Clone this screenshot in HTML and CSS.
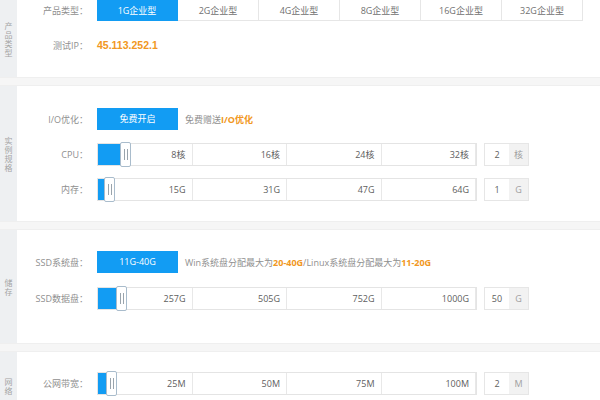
FILE: index.html
```html
<!DOCTYPE html>
<html lang="zh-CN">
<head>
<meta charset="utf-8">
<title>配置选择</title>
<link rel="stylesheet" href="styles.css">
</head>
<body>
<div class="page">
  <section class="sec sec-type">
    <div class="side"><span>产品类型</span></div>
    <div class="body">
      <div class="row row-tabs">
        <div class="label">产品类型：</div>
        <div class="tabs">
          <div class="tab active">1G企业型</div>
          <div class="tab">2G企业型</div>
          <div class="tab">4G企业型</div>
          <div class="tab">8G企业型</div>
          <div class="tab">16G企业型</div>
          <div class="tab">32G企业型</div>
        </div>
      </div>
      <div class="row">
        <div class="label">测试IP：</div>
        <div class="ip">45.113.252.1</div>
      </div>
    </div>
  </section>

  <section class="sec sec-spec">
    <div class="side"><span>实例规格</span></div>
    <div class="body">
      <div class="row">
        <div class="label">I/O优化：</div>
        <div class="btn">免费开启</div>
        <div class="hint">免费赠送<b>I/O优化</b></div>
      </div>
      <div class="row">
        <div class="label">CPU：</div>
        <div class="slider">
          <div class="seg">8核</div><div class="seg">16核</div><div class="seg">24核</div><div class="seg">32核</div>
          <div class="fill" style="width:25px"></div>
          <div class="handle" style="left:22px"><i></i><i></i></div>
        </div>
        <div class="num"><span class="val">2</span><span class="unit">核</span></div>
      </div>
      <div class="row">
        <div class="label">内存：</div>
        <div class="slider">
          <div class="seg">15G</div><div class="seg">31G</div><div class="seg">47G</div><div class="seg">64G</div>
          <div class="fill" style="width:10px"></div>
          <div class="handle" style="left:6px"><i></i><i></i></div>
        </div>
        <div class="num"><span class="val">1</span><span class="unit">G</span></div>
      </div>
    </div>
  </section>

  <section class="sec sec-disk">
    <div class="side"><span>储存</span></div>
    <div class="body">
      <div class="row">
        <div class="label">SSD系统盘：</div>
        <div class="btn">11G-40G</div>
        <div class="hint">Win系统盘分配最大为<b>20-40G</b>/Linux系统盘分配最大为<b>11-20G</b></div>
      </div>
      <div class="row">
        <div class="label">SSD数据盘：</div>
        <div class="slider">
          <div class="seg">257G</div><div class="seg">505G</div><div class="seg">752G</div><div class="seg">1000G</div>
          <div class="fill" style="width:22px"></div>
          <div class="handle" style="left:18px"><i></i><i></i></div>
        </div>
        <div class="num"><span class="val">50</span><span class="unit">G</span></div>
      </div>
    </div>
  </section>

  <section class="sec sec-net">
    <div class="side"><span>网络</span></div>
    <div class="body">
      <div class="row">
        <div class="label">公网带宽：</div>
        <div class="slider">
          <div class="seg">25M</div><div class="seg">50M</div><div class="seg">75M</div><div class="seg">100M</div>
          <div class="fill" style="width:12px"></div>
          <div class="handle" style="left:8px"><i></i><i></i></div>
        </div>
        <div class="num"><span class="val">2</span><span class="unit">M</span></div>
      </div>
    </div>
  </section>
</div>
</body>
</html>
```

FILE: styles.css
```css
* { box-sizing: border-box; }
html, body { margin: 0; padding: 0; }
body {
  width: 600px;
  height: 400px;
  overflow: hidden;
  background: #f6f6f6;
  font-family: "Open Sans", "Noto Sans CJK SC", sans-serif;
  font-size: 9px;
  color: #666;
}
.page { display: flex; flex-direction: column; gap: 7px; }
.sec {
  display: flex;
  background: #fff;
  border-top: 1px solid #efefef;
  border-bottom: 1px solid #efefef;
}
.sec-type { border-top: none; height: 78px; }
.sec-spec { height: 137px; }
.sec-disk { height: 115px; }
.sec-net { height: 70px; }
.side {
  width: 17px;
  flex: none;
  background: #eef0f2;
  display: flex;
  align-items: center;
  justify-content: center;
}
.side span {
  display: block;
  width: 8px;
  font-size: 8px;
  line-height: 9px;
  word-break: break-all;
  color: #a4a4a4;
}
.body {
  flex: 1;
  display: flex;
  flex-direction: column;
  gap: 13px;
  padding-top: 22px;
}
.sec-type .body { padding-top: 0; gap: 13px; }
.sec-disk .body { padding-top: 21px; gap: 14px; }
.sec-net .body { padding-top: 20px; }
.row {
  display: flex;
  align-items: center;
  height: 22px;
}
.row-tabs { margin-top: -1px; }
.label {
  width: 71px;
  margin-right: 9px;
  text-align: right;
  color: #8f8f8f;
  white-space: nowrap;
}
.tabs { display: flex; }
.tab {
  width: 81px;
  height: 22px;
  line-height: 21px;
  text-align: center;
  border: 1px solid #e6e6e6;
  border-left: none;
  color: #707070;
  background: #fff;
}
.tab.active {
  background: #129cf3;
  border-color: #129cf3;
  color: #fff;
}
.ip {
  color: #f19722;
  font-weight: 700;
  font-family: "Liberation Sans", "Noto Sans CJK SC", sans-serif;
  font-size: 10.5px;
}
.btn {
  width: 81px;
  height: 22px;
  line-height: 22px;
  background: #129cf3;
  color: #fff;
  text-align: center;
}
.hint {
  margin-left: 7px;
  color: #8f8f8f;
  white-space: nowrap;
}
.hint b { color: #f19722; font-weight: 700; }
.slider {
  position: relative;
  width: 380px;
  height: 23px;
  border: 1px solid #e4e4e4;
  display: grid;
  grid-template-columns: repeat(4, 1fr);
  background: #fff;
}
.seg {
  border-right: 1px solid #e8e8e8;
  text-align: right;
  padding-right: 6px;
  line-height: 21px;
  color: #606060;
}
.seg:last-of-type { border-right: none; }
.fill {
  position: absolute;
  left: 0;
  top: 0;
  bottom: 0;
  background: #129cf3;
}
.handle {
  position: absolute;
  top: -2px;
  bottom: -2px;
  width: 11px;
  background: #fff;
  border: 1px solid #a9bccc;
  border-radius: 2px;
  display: flex;
  align-items: center;
  justify-content: center;
  gap: 2px;
}
.handle i {
  display: block;
  width: 1px;
  height: 11px;
  background: #9aa4ac;
}
.num {
  display: flex;
  margin-left: 7px;
  height: 23px;
  border: 1px solid #e6e6e6;
}
.val {
  width: 24px;
  text-align: center;
  line-height: 21px;
  color: #606060;
  background: #fff;
}
.unit {
  width: 19px;
  text-align: center;
  line-height: 21px;
  background: #f2f2f2;
  color: #a0a0a0;
}
```
